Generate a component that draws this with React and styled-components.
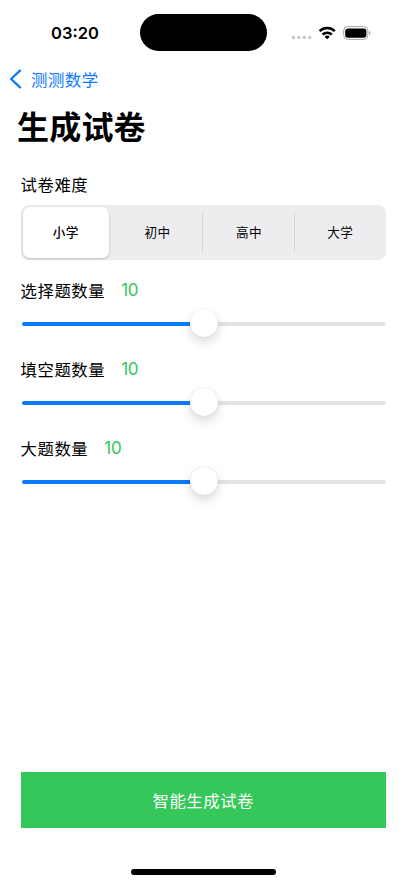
import React, { useState } from 'react'
import styled, { createGlobalStyle } from 'styled-components'
import * as Slider from '@radix-ui/react-slider'

const GlobalStyle = createGlobalStyle`
  * {
    box-sizing: border-box;
  }

  body {
    margin: 0;
    background: #fff;
    color: #000;
    font-family: Inter, "Noto Sans CJK SC", sans-serif;
  }

  button {
    margin: 0;
    padding: 0;
    border: 0;
    font-family: inherit;
  }
`

const Screen = styled.div`
  display: flex;
  flex-direction: column;
  height: 883px;
  overflow: hidden;
`

const StatusBar = styled.div`
  display: grid;
  grid-template-columns: 140px 127px 140px;
  align-items: center;
  height: 66px;
`

const Time = styled.div`
  padding-left: 10px;
  text-align: center;
  font-size: 16.5px;
  font-weight: 600;
`

const Island = styled.div`
  height: 37px;
  margin-bottom: 1px;
  border-radius: 19px;
  background: #000;
`

const StatusIcons = styled.div`
  display: flex;
  align-items: center;
  padding-left: 24px;
`

const BackButton = styled.button`
  display: flex;
  align-items: center;
  gap: 9px;
  height: 26px;
  padding-left: 9px;
  background: none;
  color: #0a7aff;
  font-size: 16.4px;
  letter-spacing: 0.5px;
`

const Title = styled.h1`
  margin: 10px 0 0;
  padding-left: 17px;
  height: 52px;
  line-height: 52px;
  font-size: 32px;
  font-weight: 700;
  letter-spacing: 0.2px;
`

const Content = styled.main`
  flex: 1;
  display: flex;
  flex-direction: column;
  padding: 19px 21px 0 20.5px;
`

const Label = styled.div`
  display: flex;
  align-items: center;
  gap: 16px;
  height: 22px;
  font-size: 16.4px;
  letter-spacing: 0.55px;
`

const Count = styled.span`
  padding-top: 1px;
  color: #34c759;
  font-size: 17px;
  letter-spacing: -0.3px;
`

const Segments = styled.div`
  display: grid;
  grid-template-columns: repeat(4, 1fr);
  height: 55px;
  margin: 10px 0 18.5px;
  border-radius: 8px;
  background: #ededef;
`

const Segment = styled.button`
  display: flex;
  align-items: center;
  justify-content: center;
  position: relative;
  margin: ${props => (props.$active ? '2px 3px 2px 2px' : 0)};
  padding-bottom: 2px;
  border-radius: 7px;
  background: ${props => (props.$active ? '#fff' : 'transparent')};
  box-shadow: ${props => (props.$active ? '0 1px 3px rgba(0, 0, 0, 0.2)' : 'none')};
  color: #000;
  font-size: 12.6px;
  font-weight: ${props => (props.$active ? 500 : 400)};
  letter-spacing: 0.4px;

  &::after {
    content: '';
    display: ${props => (props.$divider ? 'block' : 'none')};
    position: absolute;
    right: 0;
    top: 7px;
    bottom: 7px;
    width: 1px;
    background: #d8d8da;
  }
`

const Field = styled.div`
  height: 79.2px;
`

const SliderRoot = styled(Slider.Root)`
  display: flex;
  align-items: center;
  position: relative;
  height: 28px;
  margin: 8px 0 0 1px;
  touch-action: none;
`

const Track = styled(Slider.Track)`
  position: relative;
  flex: 1;
  height: 4px;
  margin-top: 2px;
  border-radius: 2px;
  background: #e4e4e6;
`

const Range = styled(Slider.Range)`
  position: absolute;
  height: 100%;
  border-radius: 2px;
  background: #0a7aff;
`

const Thumb = styled(Slider.Thumb)`
  display: block;
  width: 28px;
  height: 28px;
  border-radius: 50%;
  background: #fff;
  box-shadow: 0 0 1px rgba(0, 0, 0, 0.2), 0 5px 11px rgba(0, 0, 0, 0.15);
  outline: none;
`

const SubmitButton = styled.button`
  height: 56px;
  margin-top: auto;
  background: #35c759;
  color: #fff;
  font-size: 16.4px;
  letter-spacing: 0.5px;
`

const HomeArea = styled.div`
  display: flex;
  justify-content: center;
  align-items: flex-end;
  height: 55px;
  padding-bottom: 8px;
`

const HomeIndicator = styled.div`
  width: 145px;
  height: 6px;
  border-radius: 3px;
  background: #000;
`

const SignalIcon = () => (
  <svg width="22" height="20" viewBox="0 0 22 20" fill="#c9c9cb">
    <circle cx="2.4" cy="14.5" r="1.8" />
    <circle cx="7.9" cy="14.5" r="1.8" />
    <circle cx="13.3" cy="14.5" r="1.8" />
    <circle cx="18.7" cy="14.5" r="1.8" />
  </svg>
)

const WifiIcon = () => (
  <svg width="28" height="20" viewBox="0 0 28 20" fill="none" stroke="#000" strokeWidth="2.5">
    <path d="M6.6 8.2a10.9 10.9 0 0 1 15.2 0" />
    <path d="M9.6 11.5a6.6 6.6 0 0 1 9.2 0" />
    <path d="M14.2 16.3l-2.6-2.6a3.8 3.8 0 0 1 5.2 0z" fill="#000" stroke="none" />
  </svg>
)

const BatteryIcon = () => (
  <svg width="30" height="20" viewBox="0 0 30 20">
    <rect x="2.7" y="3.6" width="24.2" height="12.8" rx="4" fill="#fff" stroke="#a5a5a5" />
    <rect x="4.2" y="5.4" width="21.2" height="9.4" rx="2.7" fill="#000" />
    <path d="M28.2 8c1.5.6 1.5 3.4 0 4z" fill="#999" />
  </svg>
)

const BackIcon = () => (
  <svg width="13" height="20" viewBox="0 0 13 20" fill="none" stroke="currentColor" strokeWidth="2.3" strokeLinecap="round" strokeLinejoin="round">
    <path d="M11 1.6L2.1 10l8.9 8.4" />
  </svg>
)

const levels = ['小学', '初中', '高中', '大学']

const questionTypes = [
  { id: 'choice', label: '选择题数量' },
  { id: 'blank', label: '填空题数量' },
  { id: 'essay', label: '大题数量' },
]

const QuestionField = ({ label }) => {
  const [count, setCount] = useState(10)

  return (
    <Field>
      <Label>{label}<Count>{count}</Count></Label>
      <SliderRoot value={[count]} onValueChange={value => setCount(value[0])} min={0} max={20}>
        <Track><Range /></Track>
        <Thumb aria-label={label} />
      </SliderRoot>
    </Field>
  )
}

const App = () => {
  const [level, setLevel] = useState(0)

  return (
    <Screen>
      <GlobalStyle />
      <StatusBar>
        <Time>03:20</Time>
        <Island />
        <StatusIcons>
          <SignalIcon />
          <WifiIcon />
          <BatteryIcon />
        </StatusIcons>
      </StatusBar>
      <BackButton><BackIcon />测测数学</BackButton>
      <Title>生成试卷</Title>
      <Content>
        <Label>试卷难度</Label>
        <Segments>
          {
            levels.map((name, index) => (
              <Segment
                key={name}
                $active={index === level}
                $divider={index !== level && index + 1 !== level && index < levels.length - 1}
                onClick={() => setLevel(index)}
              >
                {name}
              </Segment>
            ))
          }
        </Segments>
        {questionTypes.map(item => <QuestionField key={item.id} label={item.label} />)}
        <SubmitButton>智能生成试卷</SubmitButton>
      </Content>
      <HomeArea><HomeIndicator /></HomeArea>
    </Screen>
  )
}

export default App
